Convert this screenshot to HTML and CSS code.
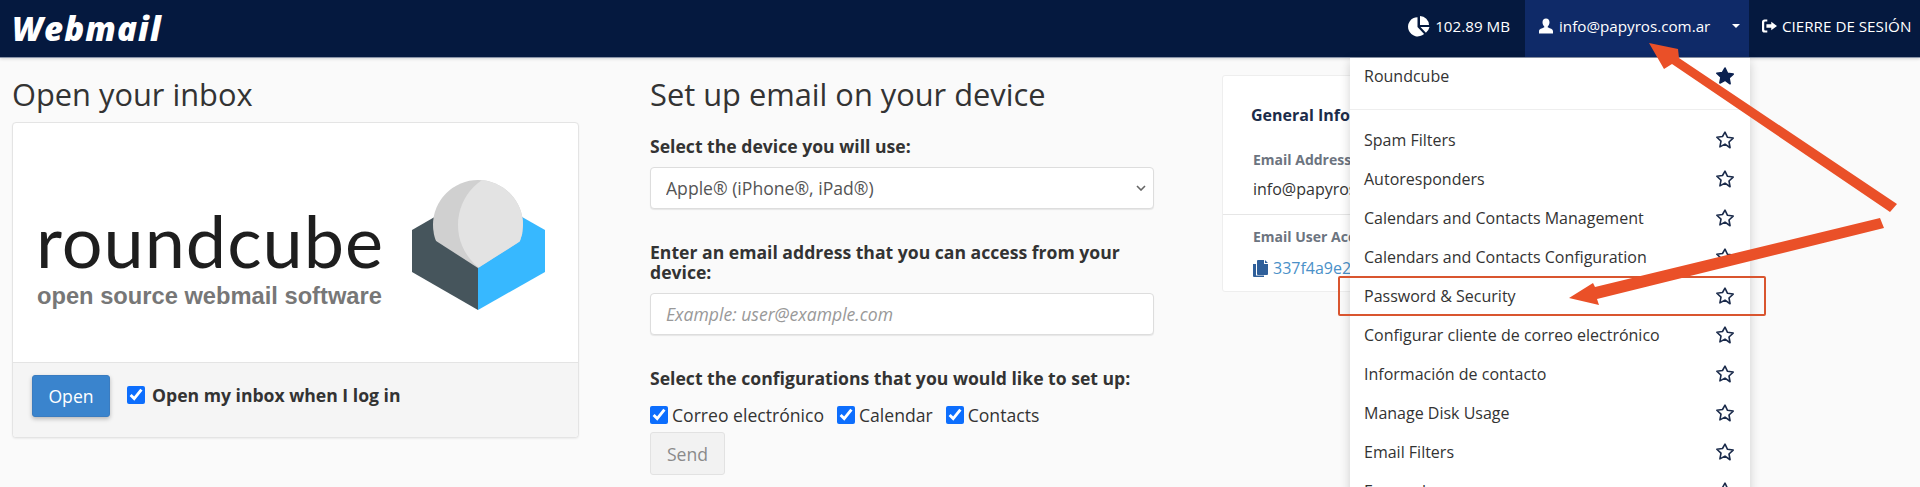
FILE: index.html
```html
<!DOCTYPE html>
<html lang="en">
<head>
  <meta charset="UTF-8">
  <title>Webmail</title>
  <link rel="stylesheet" href="styles.css">
</head>
<body>

  <!-- Top bar -->
  <header class="topbar">
    <div class="brand">Webmail</div>
    <nav class="topnav">
      <div class="nav-item disk">
        <svg class="nav-icon" width="22" height="22" viewBox="0 0 22 22"><path fill="#fff" d="M9.5 2.2v9.8l6.6 6.9A9.6 9.6 0 1 1 9.500 2.200zM12 1a9.200 9.200 0 0 1 9 9h-9zM12.500 12H21.500a9.600 9.600 0 0 1-3.600 5.700z"/></svg>
        <span>102.89 MB</span>
      </div>
      <div class="nav-item user">
        <svg class="nav-icon" width="14" height="16" viewBox="0 0 16 17"><path fill="#fff" d="M8 0c2.500 0 4 1.800 4 4.200 0 1.800-.8 3.500-1.800 4.500-.4.500-.3 1.300.3 1.600 2 1 5.500 1.700 5.500 4.200V17H0v-2.500c0-2.500 3.500-3.200 5.500-4.200.6-.3.700-1.100.3-1.600C4.800 7.700 4 6 4 4.200 4 1.800 5.500 0 8 0z"/></svg>
        <span>info@papyros.com.ar</span>
        <i class="caret"></i>
      </div>
      <div class="nav-item logout">
        <svg class="nav-icon" width="15" height="14" viewBox="0 0 17 15"><path fill="#fff" d="M6 0v2.500H3.500a1 1 0 0 0-1 1v8a1 1 0 0 0 1 1H6V15H3a3 3 0 0 1-3-3V3a3 3 0 0 1 3-3zM10.500 2.800 17 7.500l-6.500 4.700V9.500H5v-4h5.500z"/></svg>
        <span>CIERRE DE SESIÓN</span>
      </div>
    </nav>
  </header>

  <!-- Page content -->
  <main class="content">

    <section class="col-inbox">
      <h1 class="page-title">Open your inbox</h1>
      <div class="panel">
        <div class="panel-body">
          <div class="rc-words">
            <div class="rc-name">roundcube</div>
            <div class="rc-tag">open source webmail software</div>
          </div>
          <svg class="rc-cube" width="133" height="131" viewBox="0 0 133 131">
            <defs>
              <clipPath id="cube-notch"><path d="M-10 39 L66 88 L143 39 V-10 H-10z"/></clipPath>
              <clipPath id="ball"><circle cx="66" cy="45" r="45"/></clipPath>
            </defs>
            <path fill="#46555c" d="M0 50 L66 12 V130 L0 92z"/>
            <path fill="#37b8ff" d="M133 50 L66 12 V130 L133 92z"/>
            <g clip-path="url(#cube-notch)">
              <circle cx="66" cy="45" r="45" fill="#d0d0d0"/>
              <circle cx="100" cy="45" r="54" fill="#e3e3e3" clip-path="url(#ball)"/>
            </g>
          </svg>
        </div>
        <div class="panel-footer">
          <button class="btn btn-primary">Open</button>
          <label class="check check-strong"><input type="checkbox" checked> Open my inbox when I log in</label>
        </div>
      </div>
    </section>

    <section class="col-device">
      <h1 class="page-title">Set up email on your device</h1>
      <label class="field-label first">Select the device you will use:</label>
      <div class="select-wrap">
        <select class="control">
          <option>Apple® (iPhone®, iPad®)</option>
        </select>
        <svg class="select-arrow" width="10" height="6" viewBox="0 0 10 6"><path fill="none" stroke="#666" stroke-width="1.600" d="M1 1l4 4 4-4"/></svg>
      </div>
      <label class="field-label">Enter an email address that you can access from your device:</label>
      <input class="control" type="text" placeholder="Example: user@example.com">
      <label class="field-label">Select the configurations that you would like to set up:</label>
      <div class="check-row">
        <label class="check"><input type="checkbox" checked> Correo electrónico</label>
        <label class="check"><input type="checkbox" checked> Calendar</label>
        <label class="check"><input type="checkbox" checked> Contacts</label>
      </div>
      <button class="btn btn-send">Send</button>
    </section>

    <aside class="col-info">
      <div class="info-card">
        <div class="info-block">
          <h2 class="info-title">General Information</h2>
          <div class="info-label">Email Address</div>
          <div class="info-value">info@papyros.com.ar</div>
        </div>
        <div class="info-block">
          <div class="info-label">Email User Account</div>
          <div class="info-value">
            <svg class="copy-icon" width="15" height="17" viewBox="0 0 15 17"><path fill="#2f5f9a" d="M5 0h6v4h4v10a1 1 0 0 1-1 1H5a1 1 0 0 1-1-1V1a1 1 0 0 1 1-1zM12 0l3 3h-3zM0 4h3v11.500h8V17H1a1 1 0 0 1-1-1z"/></svg>
            <a class="info-link">337f4a9e21c04d8b</a>
          </div>
        </div>
      </div>
    </aside>
  </main>

  <!-- User dropdown -->
  <ul class="user-menu">
    <li class="menu-fav">Roundcube
      <svg class="star" width="20" height="20" viewBox="0 0 24 24"><path fill="#0b2150" stroke="#0b2150" stroke-width="2" stroke-linejoin="round" d="M12 2.500l3 6.300 6.800.9-5 4.700 1.300 6.900L12 17l-6.100 3.300 1.300-6.900-5-4.700 6.800-.9z"/></svg>
    </li>
    <li>Spam Filters<svg class="star" width="20" height="20" viewBox="0 0 24 24"><use href="#star-o"/></svg></li>
    <li>Autoresponders<svg class="star" width="20" height="20" viewBox="0 0 24 24"><use href="#star-o"/></svg></li>
    <li>Calendars and Contacts Management<svg class="star" width="20" height="20" viewBox="0 0 24 24"><use href="#star-o"/></svg></li>
    <li>Calendars and Contacts Configuration<svg class="star" width="20" height="20" viewBox="0 0 24 24"><use href="#star-o"/></svg></li>
    <li>Password &amp; Security<svg class="star" width="20" height="20" viewBox="0 0 24 24"><use href="#star-o"/></svg></li>
    <li>Configurar cliente de correo electrónico<svg class="star" width="20" height="20" viewBox="0 0 24 24"><use href="#star-o"/></svg></li>
    <li>Información de contacto<svg class="star" width="20" height="20" viewBox="0 0 24 24"><use href="#star-o"/></svg></li>
    <li>Manage Disk Usage<svg class="star" width="20" height="20" viewBox="0 0 24 24"><use href="#star-o"/></svg></li>
    <li>Email Filters<svg class="star" width="20" height="20" viewBox="0 0 24 24"><use href="#star-o"/></svg></li>
    <li>Forwarders<svg class="star" width="20" height="20" viewBox="0 0 24 24"><use href="#star-o"/></svg></li>
  </ul>

  <svg class="defs" width="0" height="0">
    <symbol id="star-o" viewBox="0 0 24 24">
      <path fill="none" stroke="#1a2a4a" stroke-width="1.900" stroke-linejoin="round" d="M12 2.500l3 6.300 6.800.9-5 4.700 1.300 6.900L12 17l-6.100 3.300 1.300-6.900-5-4.700 6.800-.9z"/>
    </symbol>
  </svg>

  <!-- Red annotations drawn on top of the screenshot -->
  <div class="note-box"></div>
  <svg class="note-arrows" width="1920" height="487" viewBox="0 0 1920 487">
    <path fill="#ea5028" d="M1649 43 L1678 49 L1679 58 L1897 204 L1890 212 L1672 64 L1664 69z"/>
    <path fill="#ea5028" d="M1569 298 L1593 283 L1595 287 L1880 218 L1884 228 L1597 299 L1599 305z"/>
  </svg>

</body>
</html>
```

FILE: styles.css
```css
/* General Styles */
html, body {
  margin: 0;
  padding: 0;
  height: 487px;
  overflow: hidden;
}

body {
  position: relative;
  background-color: #fafafa;
  font-family: "Open Sans", sans-serif;
  font-size: 17.6px;
  color: #333;
}

/* Top bar */
.topbar {
  display: flex;
  justify-content: space-between;
  height: 57px;
  background-color: #05193f;
  border-bottom: 1px solid #8a94a8;
  box-shadow: 0 1px 3px rgba(0, 0, 0, 0.15);
}

.brand {
  padding: 6px 0 0 12px;
  font-size: 33px;
  font-weight: 800;
  font-style: italic;
  letter-spacing: 1.1px;
  color: #fff;
}

.topnav {
  display: flex;
  font-size: 15.2px;
  color: #fff;
  white-space: nowrap;
}

.nav-item {
  display: flex;
  align-items: center;
  box-sizing: border-box;
  padding-bottom: 5px;
}

.nav-icon {
  flex: none;
}

.disk {
  gap: 5px;
  padding-right: 15px;
}

.user {
  gap: 6px;
  width: 224px;
  padding-left: 14px;
  background-color: #0f2a68;
}

.caret {
  margin-left: 16px;
  border-top: 4px solid #fff;
  border-left: 4px solid transparent;
  border-right: 4px solid transparent;
}

.logout {
  gap: 5px;
  width: 171px;
  padding-left: 13px;
}

/* Content columns */
.content {
  display: grid;
  grid-template-columns: 638px 572px 440px;
  padding-left: 12px;
}

.page-title {
  margin: 0;
  font-size: 30.8px;
  font-weight: 400;
  line-height: 38px;
  color: #333;
}

.col-inbox,
.col-device {
  padding-top: 17px;
}

.col-inbox {
  padding-right: 71px;
}

.col-device {
  padding-right: 68px;
}

/* Inbox panel */
.panel {
  margin-top: 9px;
  background-color: #fff;
  border: 1px solid #e4e4e4;
  border-radius: 4px;
  box-shadow: 0 1px 2px rgba(0, 0, 0, 0.06);
}

.panel-body {
  display: flex;
  justify-content: space-between;
  height: 239px;
  padding: 0 33px 0 24px;
  box-sizing: border-box;
}

.rc-words {
  padding-top: 77px;
}

.rc-name {
  margin-left: -1px;
  font-family: Lato, sans-serif;
  font-size: 72px;
  font-weight: 400;
  line-height: 80px;
  letter-spacing: 1px;
  color: #1e1e1e;
}

.rc-tag {
  margin-top: 2px;
  font-family: "Liberation Sans", sans-serif;
  font-size: 23.7px;
  font-weight: 700;
  line-height: 28px;
  color: #777;
}

.rc-cube {
  margin-top: 57px;
}

.panel-footer {
  display: flex;
  align-items: flex-start;
  gap: 17px;
  height: 75px;
  padding: 12px 19px 0;
  box-sizing: border-box;
  background-color: #f5f5f5;
  border-top: 1px solid #e4e4e4;
  border-radius: 0 0 4px 4px;
}

/* Buttons */
.btn {
  height: 42px;
  border-radius: 3px;
  font-family: "Open Sans", sans-serif;
  font-size: 17.6px;
}

.btn-primary {
  width: 78px;
  background-color: #3a84cd;
  border: 1px solid #3a7cc0;
  box-shadow: 0 2px 4px rgba(0, 0, 0, 0.25);
  color: #fff;
}

.btn-send {
  width: 75px;
  height: 43px;
  margin-top: 5px;
  background-color: #f2f2f2;
  border: 1px solid #e2e2e2;
  color: #8a8a8a;
}

/* Form */
.field-label {
  display: block;
  margin: 33px 0 11px;
  font-weight: 700;
  line-height: 20px;
}

.field-label.first {
  margin-top: 23px;
}

.control {
  display: block;
  width: 100%;
  height: 42px;
  box-sizing: border-box;
  padding: 0 15px;
  background-color: #fff;
  border: 1px solid #ddd;
  border-radius: 4px;
  box-shadow: 0 1px 1px rgba(0, 0, 0, 0.08);
  font-family: "Open Sans", sans-serif;
  font-size: 17.6px;
  color: #555;
}

.control::placeholder {
  font-style: italic;
  color: #999;
}

.select-wrap {
  position: relative;
}

select.control {
  appearance: none;
}

.select-arrow {
  position: absolute;
  top: 18px;
  right: 8px;
}

.check-row {
  display: flex;
  gap: 13px;
  margin-top: 15px;
}

.check {
  display: flex;
  align-items: center;
  gap: 4px;
  line-height: 24px;
}

.check input {
  width: 18px;
  height: 18px;
  margin: 0;
  accent-color: #0d6efd;
}

.check-strong {
  gap: 7px;
  padding-top: 8px;
  font-weight: 700;
}

/* General information card */
.col-info {
  padding-top: 17px;
}

.info-card {
  height: 217px;
  box-sizing: border-box;
  background-color: #fff;
  border: 1px solid #eee;
  border-radius: 3px;
}

.info-block {
  padding: 0 30px 6px;
}

.info-block + .info-block {
  padding-top: 12px;
  border-top: 1px solid #e6e6e6;
}

.info-title {
  margin: 0 0 0 -2px;
  padding: 28px 0 24px;
  font-size: 16px;
  font-weight: 700;
  line-height: 22px;
  color: #1c2c4a;
}

.info-label {
  font-size: 14px;
  font-weight: 700;
  line-height: 20px;
  color: #6c7480;
}

.info-value {
  display: flex;
  align-items: center;
  gap: 5px;
  height: 38px;
  font-size: 16px;
}

.info-block + .info-block .info-value {
  margin-top: 2px;
}

.info-link {
  color: #4a90c8;
}

/* User dropdown */
.user-menu {
  position: absolute;
  top: 58px;
  left: 1350px;
  width: 400px;
  margin: 0;
  padding: 0;
  box-sizing: border-box;
  list-style: none;
  background-color: #fff;
  box-shadow: 0 3px 10px rgba(0, 0, 0, 0.18);
}

.user-menu li {
  display: flex;
  align-items: center;
  justify-content: space-between;
  height: 39px;
  padding: 0 15px 0 14px;
  font-size: 16px;
}

.user-menu .menu-fav {
  height: 52px;
  margin-bottom: 10px;
  padding-bottom: 15px;
  box-sizing: border-box;
  border-bottom: 1px solid #eee;
}

/* Annotations */
.note-box {
  position: absolute;
  top: 276px;
  left: 1338px;
  width: 428px;
  height: 40px;
  box-sizing: border-box;
  border: 2px solid #d9552f;
  border-radius: 2px;
}

.note-arrows {
  position: absolute;
  top: 0;
  left: 0;
}

.defs {
  position: absolute;
}
```
